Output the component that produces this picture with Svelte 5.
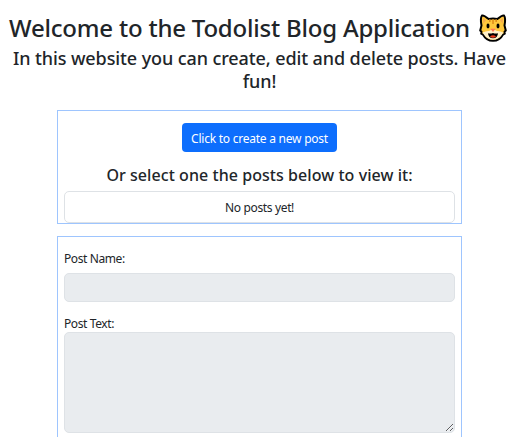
<script>
  let posts = [];
</script>

<main>
  <header>
    <h1>
      <span>Welcome to the Todolist Blog Application</span>
      <svg viewBox="0 0 30 30" width="30" height="30" aria-label="Cat">
        <path d="M4 2.5C5.4 2 8.4 4.1 10.7 6Q15 5.2 19.3 6C21.6 4.1 24.6 2 26 2.5C27.3 4.2 27.1 9.5 26.5 12.5L27.8 17.5L26.5 18.8L26.8 20.6L25 21.5C22.7 26 19.2 27.8 15 27.8S7.3 26 5 21.5L3.2 20.6L3.5 18.8L2.2 17.5L3.5 12.5C2.9 9.5 2.7 4.2 4 2.5Z" fill="#ffc83d" stroke="#000" stroke-width="2" stroke-linejoin="round" />
        <path d="M5 5L8 7.2L5.4 10.4ZM25 5L22 7.2L24.6 10.4Z" fill="#f5a94f" />
        <path d="M11.8 6.3V9M15 6.2V11M18.2 6.3V9" stroke="#e08a16" stroke-width="1.5" />
        <path d="M4.6 19.5Q8.5 17.6 11 18L15 16L19 18Q21.5 17.6 25.4 19.5L24 21.8Q20.5 26.8 15 26.8T6 21.8Z" fill="#fff0c8" />
        <ellipse cx="10" cy="13" rx="1.5" ry="2.4" fill="#000" />
        <ellipse cx="20" cy="13" rx="1.5" ry="2.4" fill="#000" />
        <path d="M12.3 15.7H17.7L15 18.9Z" fill="#ff7857" />
        <path d="M10 20.2Q12.4 21 15 20Q17.6 21 20 20.2Q19.6 25.3 15 25.3T10 20.2Z" fill="#000" />
        <path d="M11.9 23.7Q15 21 18.1 23.7Q15 25.8 11.9 23.7Z" fill="#f03a17" />
      </svg>
    </h1>
    <h2><span>In this website you can create, edit and delete posts. Have</span><br /><span>fun!</span></h2>
  </header>

  <section class="picker">
    <button>Click to create a new post</button>
    <h3>Or select one the posts below to view it:</h3>
    <div class="list">
      {#if posts.length === 0}<span>No posts yet!</span>{/if}
    </div>
  </section>

  <section class="editor">
    <label class="name-label" for="name">Post Name:</label>
    <input id="name" disabled />
    <label class="text-label" for="text">Post Text:</label>
    <textarea id="text" disabled></textarea>
  </section>
</main>

<style>
  :global(body) { overflow: hidden; background: #fff; }
  :global(html) { overflow: hidden; height: 437px; }
  main {
    width: 519px;
    height: 437px;
    overflow: hidden;
    color: #212529;
    font-family: "Noto Sans", "Open Sans", sans-serif;
    font-size: 12px;
  }
  h1, h2, h3 { margin: 0; font-weight: 500; white-space: nowrap; text-align: center; }
  header { height: 110px; box-sizing: border-box; padding-top: 12px; }
  h1 { display: flex; justify-content: center; align-items: center; gap: 8px; height: 31px; margin-right: 2px; font-size: 24px; line-height: 31px; letter-spacing: -0.21px; }
  h1 svg { flex: none; }
  h2 { margin-top: 4px; font-size: 18px; line-height: 23px; letter-spacing: -0.1px; }
  section { box-sizing: border-box; width: 405px; margin: 0 auto; border: 1px solid #9ec5fe; padding: 0 6px; }
  .picker { height: 114px; padding-top: 12px; display: flex; flex-direction: column; align-items: center; }
  button { width: 155px; height: 29px; padding: 2px 0 0; border: 0; border-radius: 4px; background: #0d6efd; color: #fff; font: 400 12px "Noto Sans", sans-serif; letter-spacing: -0.24px; white-space: nowrap; }
  h3 { margin-top: 13px; height: 20px; font-size: 16px; line-height: 20px; letter-spacing: 0.06px; }
  .list { box-sizing: border-box; width: 391px; height: 32px; margin-top: 6px; border: 1px solid #dee2e6; border-radius: 5px; text-align: center; line-height: 32px; letter-spacing: -0.35px; }
  .editor { height: 220px; margin-top: 12px; padding-top: 13px; }
  label { display: block; height: 18px; line-height: 18px; letter-spacing: -0.4px; }
  input, textarea { box-sizing: border-box; display: block; width: 391px; margin: 0; border: 1px solid #dee2e6; border-radius: 5px; background: #e9ecef; }
  input { height: 29px; margin-top: 5px; }
  .text-label { margin-top: 13px; height: 17px; }
  textarea { height: 101px; resize: vertical; }
</style>
